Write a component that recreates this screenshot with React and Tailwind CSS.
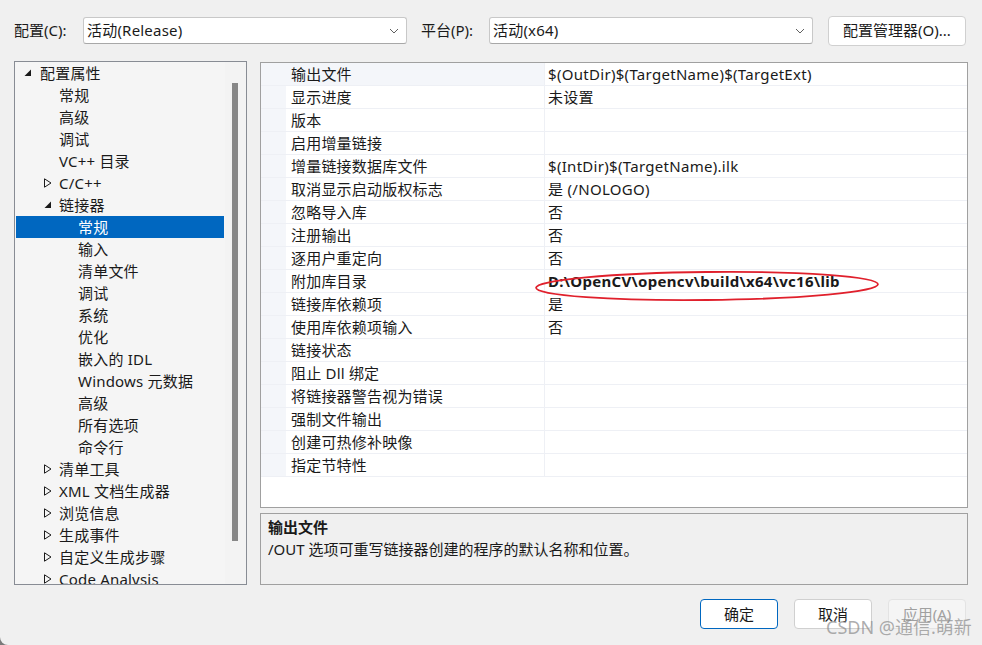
import React from 'react';

const FONT = { fontFamily: '"Noto Sans", "Noto Sans CJK SC", sans-serif' };

const treeItems = [
  { label: '配置属性', level: 0, state: 'open' },
  { label: '常规', level: 1 },
  { label: '高级', level: 1 },
  { label: '调试', level: 1 },
  { label: 'VC++ 目录', level: 1 },
  { label: 'C/C++', level: 1, state: 'closed' },
  { label: '链接器', level: 1, state: 'open' },
  { label: '常规', level: 2, selected: true },
  { label: '输入', level: 2 },
  { label: '清单文件', level: 2 },
  { label: '调试', level: 2 },
  { label: '系统', level: 2 },
  { label: '优化', level: 2 },
  { label: '嵌入的 IDL', level: 2 },
  { label: 'Windows 元数据', level: 2 },
  { label: '高级', level: 2 },
  { label: '所有选项', level: 2 },
  { label: '命令行', level: 2 },
  { label: '清单工具', level: 1, state: 'closed' },
  { label: 'XML 文档生成器', level: 1, state: 'closed' },
  { label: '浏览信息', level: 1, state: 'closed' },
  { label: '生成事件', level: 1, state: 'closed' },
  { label: '自定义生成步骤', level: 1, state: 'closed' },
  { label: 'Code Analysis', level: 1, state: 'closed' },
];

const props = [
  ['输出文件', '$(OutDir)$(TargetName)$(TargetExt)'],
  ['显示进度', '未设置'],
  ['版本', ''],
  ['启用增量链接', ''],
  ['增量链接数据库文件', '$(IntDir)$(TargetName).ilk'],
  ['取消显示启动版权标志', '是 (/NOLOGO)'],
  ['忽略导入库', '否'],
  ['注册输出', '否'],
  ['逐用户重定向', '否'],
  ['附加库目录', 'D:\\OpenCV\\opencv\\build\\x64\\vc16\\lib', true],
  ['链接库依赖项', '是'],
  ['使用库依赖项输入', '否'],
  ['链接状态', ''],
  ['阻止 Dll 绑定', ''],
  ['将链接器警告视为错误', ''],
  ['强制文件输出', ''],
  ['创建可热修补映像', ''],
  ['指定节特性', ''],
];

const Chevron = () => (
  <svg width="10" height="6" viewBox="0 0 10 6" className="mr-[7px]">
    <path d="M1 1 L5 5 L9 1" fill="none" stroke="#606060" strokeWidth="1" />
  </svg>
);

const Combo = ({ text }) => (
  <div className="w-[324px] h-[27px] bg-white border border-[#c8c8c8] border-b-[#a8a8a8] rounded-[3px] flex items-center justify-between pl-[3px]">
    <span className="text-[15px] tracking-[0.2px] text-[#1a1a1a]">{text}</span>
    <Chevron />
  </div>
);

const OpenArrow = () => (
  <svg width="8" height="8" viewBox="0 0 8 8">
    <path d="M7 0.5 L7 7 L0.5 7 Z" fill="#1a1a1a" />
  </svg>
);

const ClosedArrow = () => (
  <svg width="8" height="10" viewBox="0 0 8 10">
    <path d="M0.5 0.8 L7 5 L0.5 9.2 Z" fill="none" stroke="#1a1a1a" strokeWidth="1" />
  </svg>
);

const TreeRow = ({ item }) => {
  const arrowLeft = item.level === 0 ? 'ml-[9px]' : 'ml-[29px]';
  const textLeft = ['pl-[25px]', 'pl-[44px]', 'pl-[63px]'][item.level];
  return (
    <div
      className={`h-[22px] flex items-center relative ${item.selected ? 'bg-[#0067c0] text-white ml-px mr-px' : 'text-[#1a1a1a]'}`}
    >
      {item.state && (
        <span className={`absolute left-0 top-0 h-[22px] flex items-center ${arrowLeft}`}>
          {item.state === 'open' ? <OpenArrow /> : <ClosedArrow />}
        </span>
      )}
      <span className={`text-[15px] tracking-[0.2px] whitespace-nowrap ${item.selected ? 'pl-[62px]' : textLeft}`}>{item.label}</span>
    </div>
  );
};

const Button = ({ children, variant }) => {
  const styles = {
    primary: 'bg-white border-[#0067c0] text-[#1a1a1a]',
    normal: 'bg-white border-[#d0d0d0] text-[#1a1a1a]',
    disabled: 'bg-[#f5f5f5] border-[#e3e3e3] text-[#a0a0a0]',
  };
  return (
    <div className={`w-[78px] h-[30px] border rounded-[4px] flex items-center justify-center text-[15px] ${styles[variant]}`}>
      {children}
    </div>
  );
};

export default function App() {
  return (
    <div className="w-[982px] h-[645px] bg-[#7a7a7a]" style={FONT}>
      <div className="w-[982px] h-[645px] bg-[#f0f0f0] rounded-bl-[8px] relative overflow-hidden">
        {/* top bar */}
        <div className="flex items-center pl-[14px] pt-[17px] h-[44px]">
          <span className="w-[69px] text-[15px] text-[#1a1a1a]">配置(C):</span>
          <Combo text="活动(Release)" />
          <span className="w-[68px] ml-[14px] text-[15px] text-[#1a1a1a]">平台(P):</span>
          <Combo text="活动(x64)" />
          <div className="ml-[15px] w-[138px] h-[30px] bg-white border border-[#d0d0d0] rounded-[4px] flex items-center justify-center text-[15px] text-[#1a1a1a]">
            配置管理器(O)...
          </div>
        </div>

        <div className="flex pl-[14px] pt-[17px]">
          {/* tree */}
          <div className="w-[233px] h-[524px] border border-[#888c94] bg-[#f5f5f5] flex overflow-hidden">
            <div className="flex-1 overflow-hidden">
              {treeItems.map((item, i) => (
                <TreeRow key={i} item={item} />
              ))}
            </div>
            <div className="w-[21px] h-full bg-[#f3f3f3] pt-[21px]">
              <div className="ml-[7px] w-[6px] h-[458px] bg-[#878787]" />
            </div>
          </div>

          {/* right side */}
          <div className="ml-[13px] pt-px flex flex-col">
            <div className="w-[708px] h-[446px] border border-[#a0a0a0] bg-white relative">
              {props.map(([name, value, bold], i) => (
                <div key={i} className="flex h-[23px] border-b border-[#eef0f5]">
                  <div className="w-[25px] bg-[#f4f6fa]" />
                  <div
                    className={`w-[259px] border-r border-[#eef0f5] flex items-center pl-[5px] text-[15px] tracking-[0.2px] text-[#1a1a1a] ${i === 0 ? 'bg-[#f4f6fa]' : ''}`}
                  >
                    {name}
                  </div>
                  <div
                    className={`flex-1 flex items-center pl-[3px] text-[15px] tracking-[0.3px] text-[#1a1a1a] whitespace-nowrap ${bold ? 'font-bold' : ''}`}
                  >
                    {value}
                  </div>
                </div>
              ))}
              {/* red annotation ellipse */}
              <svg className="absolute left-[273px] top-[206px]" width="346" height="34" viewBox="0 0 346 34">
                <ellipse cx="173" cy="17" rx="171" ry="14" fill="none" stroke="#e0202c" strokeWidth="1.8" transform="rotate(-0.6 173 17)" />
              </svg>
            </div>

            <div className="mt-[5px] w-[708px] h-[72px] border border-[#a0a0a0] bg-[#f0f0f0] pl-[7px] pt-[2px] text-[#1a1a1a]">
              <div className="text-[15px] font-bold leading-[22px]">输出文件</div>
              <div className="text-[15px] leading-[22px]">/OUT 选项可重写链接器创建的程序的默认名称和位置。</div>
            </div>
          </div>
        </div>

        {/* bottom buttons */}
        <div className="flex justify-end gap-[16px] pr-[16px] pt-[14px]">
          <Button variant="primary">确定</Button>
          <Button variant="normal">取消</Button>
          <Button variant="disabled">应用(A)</Button>
        </div>

        {/* watermark */}
        <div className="absolute left-[826px] top-[614px] text-[18px] text-[#8a8a8a]/70 whitespace-nowrap">
          CSDN @通信.萌新
        </div>
      </div>
    </div>
  );
}
